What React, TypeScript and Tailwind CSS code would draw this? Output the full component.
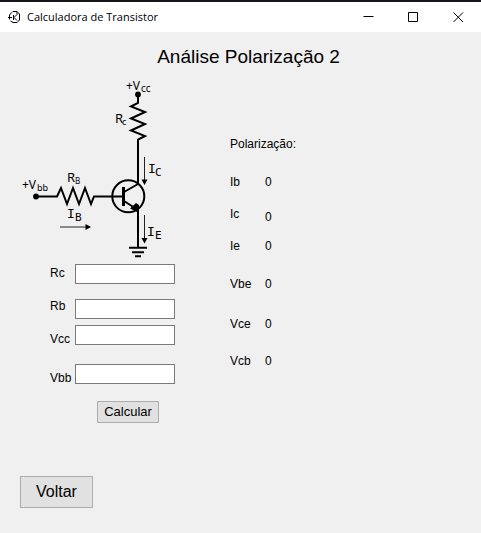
import { useId } from "react";

const fields = [
  { name: "Rc", labelGap: "mt-0", inputGap: "mt-0" },
  { name: "Rb", labelGap: "mt-[17px]", inputGap: "mt-[15px]" },
  { name: "Vcc", labelGap: "mt-[17px]", inputGap: "mt-[6px]" },
  { name: "Vbb", labelGap: "mt-[23px]", inputGap: "mt-[19px]" },
];

const results = [
  { name: "Ib", gap: "mt-[22px]" },
  { name: "Ic", gap: "mt-4", valueGap: "pt-[3px]" },
  { name: "Ie", gap: "mt-[13px]" },
  { name: "Vbe", gap: "mt-[22px]" },
  { name: "Vce", gap: "mt-6" },
  { name: "Vcb", gap: "mt-[21px]" },
];

function AppIcon() {
  return (
    <svg viewBox="0 0 13 13" className="h-[13px] w-[13px]" fill="none" stroke="#000" aria-hidden="true">
      <path d="M4 1.5L5 0.5H9L11.5 3V9L9 11.500H5L2.500 10M1.500 8.500V4L3.500 1.500" />
      <path d="M0 6.5H4M5.5 4V9M6 6.5L9 3.5V1M6 6.5L9 9.500" />
    </svg>
  );
}

function TitleBar() {
  const button = "flex w-[45px] items-center justify-center hover:bg-gray-200";
  return (
    <header className="flex h-8 items-stretch border-t-2 border-[#15171c] bg-white pl-2">
      <div className="flex flex-1 items-center gap-1.5">
        <AppIcon />
        <h1 className="whitespace-nowrap font-['Open_Sans','Noto_Sans',sans-serif] text-[11px] leading-4">
          Calculadora de Transistor
        </h1>
      </div>
      <button type="button" aria-label="Minimizar" className={button}>
        <svg viewBox="0 0 11 11" className="h-[11px] w-[11px]" stroke="#000" fill="none"><path d="M0.5 4.5H10.5" /></svg>
      </button>
      <button type="button" aria-label="Maximizar" className={button}>
        <svg viewBox="0 0 11 11" className="h-[11px] w-[11px]" stroke="#000" fill="none"><path d="M0.5 0.5H9.5V9.5H0.5Z" /></svg>
      </button>
      <button type="button" aria-label="Fechar" className={button}>
        <svg viewBox="0 0 11 11" className="h-[11px] w-[11px]" stroke="#000" fill="none"><path d="M0.5 0.5L10 10M10 0.5L0.5 10" /></svg>
      </button>
    </header>
  );
}

function Circuit() {
  return (
    <svg
      viewBox="10 72 180 190"
      className="ml-[10px] block h-[190px] w-[180px]"
      role="img"
      aria-label="Circuito de polarização do transistor"
    >
      <g fill="none" stroke="#000" strokeWidth="2">
        <path d="M138 95V103L131 106.5L145 112L131 118.5L145 124L131 130.5L145 136L138 139.5V184L124 192" />
        <path d="M36 196.5H57L61 188L67 204L73 188L79 204L85 188L91 204L94 196.5H123" />
        <path d="M124 201L138 210V247" />
        <circle cx="128.3" cy="196.3" r="16" />
        <path d="M123.5 187V206" strokeWidth="3" />
        <path d="M129 247.7H147M132 252.2H144M135 256.2H141" />
      </g>
      <circle cx="138" cy="94.5" r="2.9" />
      <circle cx="36" cy="196.5" r="2.9" />
      <path d="M136 203L139 205V213L130 208.5Z" />
      <path d="M144.5 157V181M144.5 215V240M60 227H87" stroke="#222" fill="none" />
      <path d="M141.5 179.500H147.5L144.5 185ZM141.5 238H147.5L144.5 243.5ZM85.5 224V230L91 227Z" />
      <g className="font-['Noto_Sans','Open_Sans',sans-serif]" fontSize="12">
        <text x="126" y="90">+V</text>
        <text x="141" y="92" fontSize="10">cc</text>
        <text x="115" y="123" fontSize="13">R</text>
        <text x="122" y="125" fontSize="9">c</text>
        <text x="22" y="189">+V</text>
        <text x="37" y="191" fontSize="9">bb</text>
        <text x="67" y="182" fontSize="13">R</text>
        <text x="75" y="184" fontSize="8">B</text>
      </g>
      <g className="font-['DejaVu_Sans_Mono',monospace]" fontSize="13">
        <text x="148" y="173">I</text>
        <text x="155" y="176" fontSize="11">C</text>
        <text x="67" y="218">I</text>
        <text x="75" y="221" fontSize="11">B</text>
        <text x="147" y="236">I</text>
        <text x="155" y="239" fontSize="11">E</text>
      </g>
    </svg>
  );
}

export default function App() {
  const id = useId();
  return (
    <div className="flex min-h-screen flex-col bg-[#f0f0f0] font-['Liberation_Sans',Arial,sans-serif] text-[12px] leading-4 text-black">
      <TitleBar />
      <main className="flex-1 pt-[13px] pb-6">
        <h2 className="mb-[3px] pl-4 text-center text-[19px] leading-6">Análise Polarização 2</h2>
        <div className="flex items-start">
          <form className="w-[230px] shrink-0" onSubmit={(e) => e.preventDefault()}>
            <Circuit />
            <div className="mt-0.5 flex pl-[50px]">
              <div className="flex w-[25px] flex-col pt-px">
                {fields.map((f) => (
                  <label key={f.name} htmlFor={id + f.name} className={f.labelGap}>
                    {f.name}
                  </label>
                ))}
              </div>
              <div className="flex w-[100px] flex-col">
                {fields.map((f) => (
                  <input
                    key={f.name}
                    id={id + f.name}
                    type="text"
                    className={`h-5 w-full border border-[#7a7a7a] bg-white px-1 outline-none ${f.inputGap}`}
                  />
                ))}
              </div>
            </div>
            <button
              type="submit"
              className="mt-[15px] ml-[97px] flex h-[22px] w-[62px] items-center justify-center border border-[#adadad] bg-[#e1e1e1] text-[13px]"
            >
              Calcular
            </button>
          </form>
          <section className="pt-16">
            <h3>Polarização:</h3>
            <dl>
              {results.map((r) => (
                <div key={r.name} className={`flex ${r.gap}`}>
                  <dt className="w-[35px]">{r.name}</dt>
                  <dd className={r.valueGap}>0</dd>
                </div>
              ))}
            </dl>
          </section>
        </div>
        <button
          type="button"
          className="mt-[53px] ml-5 flex h-8 w-[73px] items-center justify-center border border-[#adadad] bg-[#e1e1e1] text-[16px]"
        >
          Voltar
        </button>
      </main>
    </div>
  );
}
